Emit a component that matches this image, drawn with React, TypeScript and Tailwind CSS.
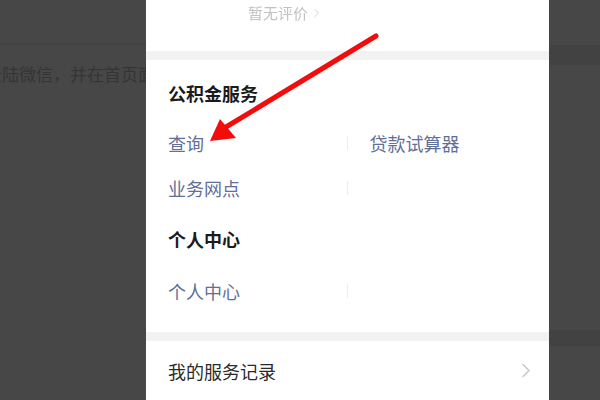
const font = { fontFamily: '"Noto Sans CJK SC", "Noto Sans", sans-serif' };

function Chevron({ className }: { className: string }) {
  return (
    <svg viewBox="0 0 8 14" className={className} fill="none">
      <path d="M1 1l6 6-6 6" stroke="currentColor" strokeWidth="1.4" strokeLinecap="round" strokeLinejoin="round" />
    </svg>
  );
}

function LinkRow({ left, right }: { left: string; right?: string }) {
  return (
    <div className="grid grid-cols-2 h-[30px] shrink-0">
      <div className="flex items-center justify-between pl-[22px]">
        <span className="text-[18px] leading-[24px] text-[#5f6f98]">{left}</span>
        <span className="w-px h-[14px] bg-[#ededed]" />
      </div>
      <div className="flex items-center pl-[22px]">
        {right && <span className="text-[18px] leading-[24px] text-[#5f6f98]">{right}</span>}
      </div>
    </div>
  );
}

function Arrow() {
  return (
    <svg className="absolute inset-0 pointer-events-none" width="600" height="400" viewBox="0 0 600 400">
      <line x1="376" y1="36" x2="226" y2="127" stroke="#f20c0c" strokeWidth="5" strokeLinecap="round" />
      <polygon points="210,141 220,119 236,138" fill="#f20c0c" />
    </svg>
  );
}

export default function App() {
  return (
    <div className="relative w-[600px] h-[400px] overflow-hidden bg-[#474747] flex" style={font}>
      {/* dimmed page behind the sheet */}
      <div className="w-[146px] shrink-0 overflow-hidden">
        <div className="h-[43px]" />
        <div className="h-[2px] bg-[#434343]" />
        <div className="mt-[18px] ml-[-15px] whitespace-nowrap text-[17px] leading-[22px] text-[#353535]">
          登陆微信，并在首页面
        </div>
      </div>

      {/* sheet */}
      <div className="w-[403px] shrink-0 bg-white flex flex-col">
        <div className="h-[51px] shrink-0 pl-[102px] pt-[3px] flex items-start">
          <div className="flex items-center gap-[6px] h-[20px] text-[15px] text-[#c2c2c2] blur-[0.4px]">
            <span>暂无评价</span>
            <Chevron className="w-[5px] h-[10px] text-[#cdcdcd]" />
          </div>
        </div>
        <div className="h-[9px] shrink-0 bg-[#f2f2f2]" />

        <div className="h-[68px] shrink-0 flex items-center pb-[2px] pl-[22px]">
          <span className="text-[18px] leading-[24px] font-semibold text-[#1b1b1b]">公积金服务</span>
        </div>
        <LinkRow left="查询" right="贷款试算器" />
        <div className="h-[15px] shrink-0" />
        <LinkRow left="业务网点" />
        <div className="h-[21px] shrink-0" />
        <div className="h-[30px] shrink-0 flex items-center pl-[22px]">
          <span className="text-[18px] leading-[24px] font-semibold text-[#1b1b1b]">个人中心</span>
        </div>
        <div className="h-[22px] shrink-0" />
        <LinkRow left="个人中心" />
        <div className="h-[26px] shrink-0" />
        <div className="h-[9px] bg-[#f2f2f2] shrink-0" />

        <div className="h-[59px] shrink-0 flex items-center justify-between pl-[22px] pr-[19px]">
          <span className="text-[18px] leading-[24px] text-[#2a2a2a]">我的服务记录</span>
          <Chevron className="w-[8px] h-[15px] text-[#c4c4c4]" />
        </div>
      </div>

      {/* right dim strip */}
      <div className="flex-1 flex flex-col">
        <div className="h-[45px]" />
        <div className="h-[20px] bg-[#424242]" />
        <div className="h-[265px]" />
        <div className="h-[16px] bg-[#424242]" />
      </div>

      <Arrow />
    </div>
  );
}
